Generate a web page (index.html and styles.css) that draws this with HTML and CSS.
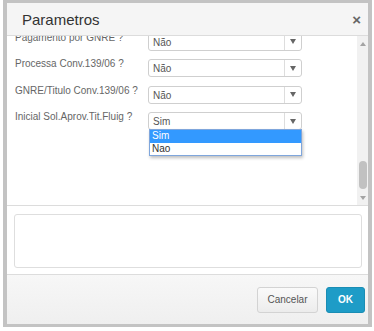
FILE: index.html
```html
<!DOCTYPE html>
<html lang="pt">
<head>
  <meta charset="UTF-8" />
  <title>Parametros</title>
  <link rel="stylesheet" href="styles.css">
</head>
<body>

  <div class="modal">
    <!-- Cabeçalho -->
    <div class="modal-header">
      <span class="modal-title">Parametros</span>
      <span class="modal-close">&times;</span>
    </div>

    <!-- Lista de parametros -->
    <div class="modal-body">
      <div class="param-area">
        <div class="param-list">
          <div class="param-row">
            <label>Pagamento por GNRE ?</label>
            <div class="combo"><span>Não</span><i class="combo-arrow"></i></div>
          </div>
          <div class="param-row">
            <label>Processa Conv.139/06 ?</label>
            <div class="combo"><span>Não</span><i class="combo-arrow"></i></div>
          </div>
          <div class="param-row">
            <label>GNRE/Titulo Conv.139/06 ?</label>
            <div class="combo"><span>Não</span><i class="combo-arrow"></i></div>
          </div>
          <div class="param-row">
            <label>Inicial Sol.Aprov.Tit.Fluig ?</label>
            <div class="combo"><span>Sim</span><i class="combo-arrow"></i>
              <ul class="combo-list">
                <li class="selected">Sim</li>
                <li>Nao</li>
              </ul>
            </div>
          </div>
        </div>
      </div>
      <div class="scrollbar">
        <i class="sb-up"></i>
        <div class="sb-track"><div class="sb-thumb"></div></div>
        <i class="sb-down"></i>
      </div>
    </div>

    <div class="modal-extra">
      <div class="memo"></div>
    </div>

    <!-- Rodapé -->
    <div class="modal-footer">
      <button class="btn">Cancelar</button>
      <button class="btn btn-primary">OK</button>
    </div>
  </div>

</body>
</html>
```

FILE: styles.css
```css
body {
  margin: 0;
  background: #fff;
  font-family: "Liberation Sans Narrow", "Liberation Sans", Arial, sans-serif;
  color: #333;
}
.modal {
  margin-left: 3px;
  width: 361px;
  border: solid #c3c3c3;
  border-width: 3px 4px;
  background: #fff;
}
.modal-header {
  height: 32px;
  background: #f5f5f5;
  border-bottom: 1px solid #dcdcdc;
  display: flex;
  align-items: center;
  justify-content: space-between;
  padding: 0 7px 0 15px;
}
.modal-title {
  font-size: 15px;
  color: #333;
  padding-top: 1px;
}
.modal-close {
  font-family: "Liberation Sans", Arial, sans-serif;
  font-size: 15px;
  font-weight: bold;
  color: #666;
}
.modal-body {
  height: 169px;
  display: flex;
  border-bottom: 1px solid #dcdcdc;
}
.param-area {
  flex: 1;
  overflow: hidden;
}
.param-list {
  margin-top: -3.5px;
  padding-left: 8px;
  display: flex;
  flex-direction: column;
  gap: 8.5px;
}
.param-row {
  display: flex;
  align-items: flex-start;
}
.param-row label {
  width: 133px;
  font-size: 10px;
  line-height: 11px;
  margin-top: -1px;
  color: #666;
}
.combo {
  position: relative;
  box-sizing: border-box;
  width: 154px;
  height: 18px;
  border: 1px solid #cfcfcf;
  border-radius: 3px;
  background: #fff;
  display: flex;
  align-items: center;
  font-size: 10px;
  color: #555;
}
.combo span {
  flex: 1;
  padding-left: 4px;
  padding-top: 1px;
}
.combo-arrow {
  width: 16px;
  height: 100%;
  border-left: 1px solid #ddd;
  display: flex;
  align-items: center;
  justify-content: center;
}
.combo-arrow::after {
  content: "";
  border-left: 3.5px solid transparent;
  border-right: 3.5px solid transparent;
  border-top: 5px solid #666;
}
.combo-list {
  position: absolute;
  top: 100%;
  left: 0;
  width: 153px;
  box-sizing: border-box;
  margin: 0;
  padding: 0;
  list-style: none;
  background: #fff;
  border: 1px solid #7fa6dc;
  box-shadow: 1px 2px 3px rgba(0, 0, 0, 0.25);
  color: #333;
}
.combo-list li {
  height: 12.5px;
  line-height: 12.5px;
  padding-left: 2px;
}
.combo-list li.selected {
  background: #3399ff;
  color: #fff;
}
.scrollbar {
  width: 11px;
  background: #f1f1f1;
  display: flex;
  flex-direction: column;
  align-items: center;
}
.sb-up, .sb-down {
  height: 15px;
  display: flex;
  align-items: center;
  justify-content: center;
}
.sb-up::after {
  content: "";
  border-left: 3px solid transparent;
  border-right: 3px solid transparent;
  border-bottom: 4px solid #a3a3a3;
}
.sb-down::after {
  content: "";
  border-left: 3px solid transparent;
  border-right: 3px solid transparent;
  border-top: 4px solid #a3a3a3;
}
.sb-track {
  flex: 1;
  display: flex;
  flex-direction: column;
  justify-content: flex-end;
  padding-bottom: 1px;
}
.sb-thumb {
  width: 8px;
  height: 28px;
  border-radius: 4px;
  background: #c1c1c1;
}
.modal-extra {
  padding: 8px 6px 6px 7px;
}
.memo {
  height: 52px;
  border: 1px solid #dedede;
  border-radius: 3px;
}
.modal-footer {
  height: 50px;
  box-sizing: border-box;
  border-top: 1px solid #dcdcdc;
  background: linear-gradient(#f7f7f7, #efefef);
  display: flex;
  justify-content: flex-end;
  align-items: center;
  gap: 8px;
  padding: 0 3px 0 0;
}
.btn {
  height: 26px;
  width: 61px;
  border: 1px solid #d3d3d3;
  border-radius: 3px;
  background: linear-gradient(#fafafa, #ececec);
  font-family: inherit;
  font-size: 10px;
  color: #555;
  padding: 0;
}
.btn-primary {
  width: 39px;
  border-color: #1a8db4;
  background: #1e9cc7;
  color: #fff;
  font-weight: bold;
}
```
